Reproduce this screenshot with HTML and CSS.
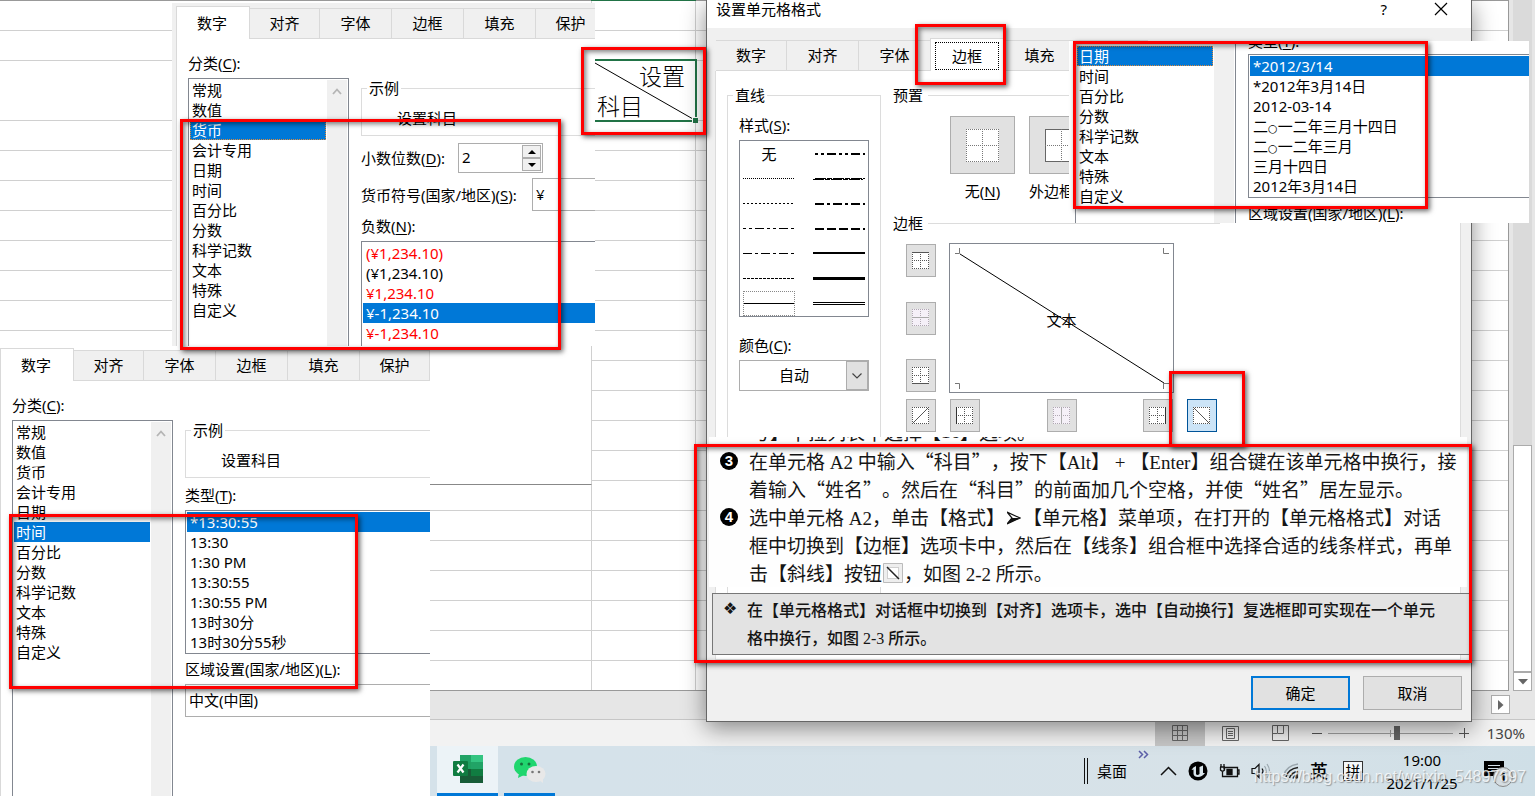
FILE: index.html
```html
<!DOCTYPE html>
<html lang="zh-CN">
<head>
<meta charset="utf-8">
<title>设置单元格格式</title>
<link rel="stylesheet" href="styles.css">
</head>
<body>
<svg class="defs" aria-hidden="true">
  <symbol id="cell" viewBox="0 0 17 17">
    <rect width="17" height="17" fill="#fff"/>
    <path d="M0 .5H17M0 16.5H17M.5 0V17M16.5 0V17M0 8.5H17M8.5 0V17" stroke="#555" stroke-dasharray="1 1"/>
  </symbol>
  <symbol id="cell-off" viewBox="0 0 17 17">
    <rect width="17" height="17" fill="#f5f0f8"/>
    <path d="M0 .5H17M0 16.5H17M.5 0V17M16.5 0V17M0 8.5H17M8.5 0V17" stroke="#b0a8b2" stroke-dasharray="1 1"/>
  </symbol>
  <symbol id="cell-open" viewBox="0 0 17 17">
    <rect width="17" height="17" fill="#fff"/>
    <path d="M0 .5H17M0 16.5H17M.5 0V17M16.5 0V17" stroke="#555" stroke-dasharray="1 1"/>
  </symbol>
  <symbol id="chev-up" viewBox="0 0 10 7"><path d="M1 6L5 1.5L9 6" fill="none" stroke="#b5b5b5" stroke-width="1.8"/></symbol>
</svg>

<div class="desktop">
  <main class="workbook">
    <div class="grid">
      <i></i><i></i><i class="tall"></i><i></i><i></i><i></i><i></i><i></i><i></i><i></i><i></i><i></i><i></i><i></i><i></i><i></i><i></i><i></i><i></i><i></i><i></i><i></i>
      <div class="object"></div>
      <div class="top-edge"></div>
    </div>
    <div class="vscroll">
      <div class="thumb"></div>
      <button class="arrow" aria-label="向下滚动"><svg width="10" height="6"><path d="M0 0H10L5 5.5Z" fill="#666"/></svg></button>
    </div>
  </main>
  <div class="hscroll"><button class="arrow" aria-label="向右滚动"><svg width="6" height="10"><path d="M0 0V10L5.5 5Z" fill="#666"/></svg></button></div>
  <div class="status">
    <button class="view on" aria-label="普通"><svg width="16" height="16" fill="none" stroke="#666"><path d="M.5 .5H15.5V15.5H.5ZM5.5 0V16M10.5 0V16M0 5.5H16M0 10.5H16"/></svg></button>
    <button class="view" aria-label="页面布局"><svg width="17" height="15" fill="none" stroke="#666"><path d="M.5 .5H16.5V14.5H.5ZM4.5 2.5H12.5V12.5H4.5ZM6 5.5H11M6 7.5H11M6 9.5H11"/></svg></button>
    <button class="view" aria-label="分页预览"><svg width="17" height="16" fill="none" stroke="#666"><path d="M.5 .5H16.5V15.5H.5ZM5.5 0V8.5H11.5V0M0 8.5H5"/></svg></button>
    <div class="zoom">
      <svg width="10" height="10"><path d="M0 5.5H10" stroke="#555"/></svg>
      <svg width="125" height="16"><path d="M0 8.5H125M62.5 5V12" stroke="#a0a0a0"/><rect x="66" y="1" width="6" height="14" fill="#666"/></svg>
      <svg width="10" height="10"><path d="M0 5.5H10M5.5 0V10" stroke="#555"/></svg>
    </div>
    <span class="percent">130%</span>
  </div>

  <footer class="taskbar">
    <div class="apps">
      <button class="app current" aria-label="Excel"><svg width="30" height="29" viewBox="0 0 30 29">
        <rect x="7" y="0" width="12" height="8" fill="#21a366"/><rect x="18" y="0" width="12" height="8" fill="#33c481"/>
        <rect x="7" y="7" width="12" height="7" fill="#1ea160"/><rect x="18" y="7" width="12" height="7" fill="#21a366"/>
        <rect x="7" y="14" width="12" height="7" fill="#185c37"/><rect x="18" y="14" width="12" height="7" fill="#107c41"/>
        <rect x="7" y="21" width="23" height="7" fill="#185c37"/><rect x="0" y="6" width="15" height="15" rx="1" fill="#107c41"/>
        <path d="M4.500 9.500L10.500 17.500M10.500 9.500L4.500 17.500" stroke="#fff" stroke-width="2.200"/></svg></button>
      <button class="app" aria-label="微信"><svg width="32" height="26" viewBox="0 0 32 26">
        <ellipse cx="11.500" cy="9.500" rx="11.500" ry="9.500" fill="#20d66e"/><path d="M5 16L4 21L10 18Z" fill="#20d66e"/>
        <circle cx="7.500" cy="7" r="1.500" fill="#14713b"/><circle cx="15" cy="7" r="1.500" fill="#14713b"/>
        <ellipse cx="22" cy="17" rx="9.500" ry="8" fill="#e8e8e8"/><path d="M25 23L29 26L29 21Z" fill="#e8e8e8"/>
        <circle cx="18.500" cy="15" r="1.300" fill="#777"/><circle cx="25" cy="15" r="1.300" fill="#777"/></svg></button>
    </div>
    <div class="tray">
      <svg width="4" height="26"><path d="M.5 0V26M3.500 0V26" stroke="#111"/></svg>
      <span>桌面</span>
      <svg class="more" width="11" height="9" fill="none" stroke="#5c5fa8" stroke-width="1.500"><path d="M1 1L4.500 4.500L1 8M6 1L9.500 4.500L6 8"/></svg>
      <svg width="17" height="10"><path d="M1 9L8.500 1.500L16 9" fill="none" stroke="#111" stroke-width="1.500"/></svg>
      <svg width="20" height="20"><circle cx="10" cy="10" r="9.500" fill="#000"/><path d="M3.500 9Q5 6 8 5V13Q9 15 11.500 13V6L15 4.500V12L17 12Q14 16 10 16Q6 16 5.500 13V8.500Z" fill="#d8e4ea"/></svg>
      <svg width="21" height="14" fill="none" stroke="#111" stroke-width="1.300"><path d="M5 5.500V3.500H18.500V12.500H6M18.500 6H20V10H18.500M1 3H6M1.500 3V6Q3.500 8.500 5.500 6V3M2 0V3M5 0V3M3.500 8V12.500H6"/><path d="M8 5.500H13V10.500H8Z" fill="#111"/></svg>
      <svg width="21" height="16" fill="none" stroke="#111" stroke-width="1.200"><path d="M1 5.500H4L8 1.500V14.500L4 10.500H1Z"/><path d="M11 5.500Q13 8 11 10.500"/><path d="M13.500 3Q17 8 13.500 13M16 1Q21 8 16 15" stroke="#9aa6ad"/></svg>
      <svg width="16" height="16" fill="none" stroke="#222" stroke-width="1.400"><path d="M1 12Q3 3 15 1" stroke="#9aa6ad"/><path d="M3 14Q5 6 15 4.500M6.500 15Q8 9.500 15 8.500M10 15.500Q11 12.500 15 12"/><circle cx="13.500" cy="14" r="1" fill="#222"/></svg>
      <span class="ime">英</span>
      <span class="pin">拼</span>
      <span class="clock"><time>19:00</time><time>2021/1/25</time></span>
      <button class="notice" aria-label="通知"><svg width="21" height="20"><path d="M0 0H20V15H16L12 19V15H0Z" fill="#000"/><path d="M4 4.500H16M4 7.500H16M4 10.500H12" stroke="#d4e1e9"/></svg><b>1</b></button>
    </div>
    <div class="watermark">https://blog.csdn.net/weixin_54897697</div>
  </footer>

  <div class="merged"><svg width="99" height="60"><path d="M0 2L98 58" stroke="#000"/></svg><span class="col">设置</span><span class="row">科目</span><b></b></div>

  <section class="dialog">
    <header><h1>设置单元格格式</h1>
      <div class="caption"><button aria-label="帮助">?</button><button aria-label="关闭"><svg width="14" height="14"><path d="M1 1L13 13M13 1L1 13" stroke="#000" stroke-width="1.200"/></svg></button></div>
    </header>
    <div class="tabs"><button class="tab">数字</button><button class="tab">对齐</button><button class="tab">字体</button><button class="tab on"><span>边框</span></button><button class="tab">填充</button><button class="tab">保护</button></div>
    <div class="page">
      <fieldset class="lines"><legend>直线</legend>
        <p id="style-l">样式(<u>S</u>):</p>
        <ul class="styles" aria-labelledby="style-l">
          <li>无</li>
          <li><svg><path class="w2" d="M2 13H52" stroke-dasharray="3 3 3 3 9 3"/></svg></li>
          <li><svg><path d="M0 12.500H52" stroke-dasharray="1 1"/></svg></li>
          <li><svg><path d="M0 13.500H50M2 12.500H52" stroke-dasharray="11 1 5 1"/></svg></li>
          <li><svg><path d="M0 12.500H52" stroke-dasharray="2 2"/></svg></li>
          <li><svg><path class="w2" d="M2 13H52" stroke-dasharray="9 3 3 3"/></svg></li>
          <li><svg><path d="M0 12.500H52" stroke-dasharray="3 3 3 3 9 3"/></svg></li>
          <li><svg><path class="w2" d="M2 13H52" stroke-dasharray="9 3"/></svg></li>
          <li><svg><path d="M0 12.500H52" stroke-dasharray="9 3 3 3"/></svg></li>
          <li><svg><path class="w2" d="M0 12H52"/></svg></li>
          <li><svg><path d="M0 12.500H52" stroke-dasharray="3 1"/></svg></li>
          <li><svg><path class="w3" d="M0 12.500H52"/></svg></li>
          <li class="sel"><svg><path d="M0 12.500H52"/></svg></li>
          <li><svg><path d="M0 11.500H52M0 13.500H52"/></svg></li>
        </ul>
        <label for="color">颜色(<u>C</u>):</label>
        <div class="combo"><select id="color"><option>自动</option></select><svg width="10" height="6"><path d="M.5 .5L5 5L9.500 .5" fill="none" stroke="#444" stroke-width="1.200"/></svg></div>
      </fieldset>
      <div class="borders">
        <h2>预置</h2>
        <div class="presets">
          <div><button class="preset" aria-labelledby="none-l"><svg width="33" height="33"><rect width="33" height="33" fill="#fff"/><path d="M0 .5H33M0 32.500H33M.5 0V33M32.500 0V33M0 16.500H33M16.500 0V33" stroke="#777" stroke-dasharray="1 1"/></svg></button><span id="none-l">无(<u>N</u>)</span></div>
          <div><button class="preset" aria-labelledby="out-l"><svg width="33" height="33"><rect x=".5" y=".5" width="32" height="32" fill="#fff" stroke="#666"/><path d="M0 16.500H33M16.500 0V33" stroke="#777" stroke-dasharray="1 1"/></svg></button><span id="out-l">外边框</span></div>
        </div>
        <h2 class="short">边框</h2>
        <div class="editor">
          <div class="side">
            <button class="edge" aria-label="上边框"><svg width="17" height="17"><use href="#cell"/><path d="M0 .5H17" stroke="#555"/></svg></button>
            <button class="edge" aria-label="内部横线" disabled><svg width="17" height="17"><use href="#cell-off"/><path d="M0 8.500H17" stroke="#aaa"/></svg></button>
            <button class="edge" aria-label="下边框"><svg width="17" height="17"><use href="#cell"/><path d="M0 16.500H17" stroke="#555"/></svg></button>
          </div>
          <div class="preview"><svg viewBox="0 0 223 148"><g fill="none" stroke="#777"><path d="M5 9.500H9.500V4M213.500 4V9.500H219M5 139.500H9.500V145M213.500 145V139.500H219"/></g><path d="M10 10L214 139" stroke="#000"/></svg><span>文本</span></div>
          <span></span>
          <button class="edge" aria-label="斜线"><svg width="17" height="17"><use href="#cell-open"/><path d="M1 16L16 1" stroke="#555"/></svg></button>
          <div class="under">
            <button class="edge" aria-label="左边框"><svg width="17" height="17"><use href="#cell"/><path d="M.5 0V17" stroke="#333"/></svg></button>
            <button class="edge" aria-label="内部竖线" disabled><svg width="17" height="17"><use href="#cell-off"/><path d="M8.500 0V17" stroke="#aaa"/></svg></button>
            <button class="edge" aria-label="右边框"><svg width="17" height="17"><use href="#cell"/><path d="M16.500 0V17" stroke="#333"/></svg></button>
          </div>
          <button class="edge on" aria-label="反斜线"><svg width="17" height="17"><use href="#cell-open"/><path d="M1 1L16 16" stroke="#555"/></svg></button>
        </div>
      </div>
    </div>
    <div class="actions"><button class="ok">确定</button><button>取消</button></div>
  </section>

  <article class="scan">
    <p class="cut">号】下拉列表中选择【<span>16</span>】选项。</p>
    <div class="step"><b>3</b><p>在单元格<span> A2 </span>中输入“科目”，按下【<span>Alt</span>】<span> + </span>【<span>Enter</span>】组合键在该单元格中换行，接<br>着输入“姓名”。然后在“科目”的前面加几个空格，并使“姓名”居左显示。</p></div>
    <div class="step"><b>4</b><p>选中单元格<span> A2</span>，单击【格式】<svg width="14" height="14"><path d="M0 1L13 7L0 13L5 7Z" fill="none" stroke="#111" stroke-width="1.200"/><path d="M0 13L5 7H13Z" fill="#111"/></svg>【单元格】菜单项，在打开的【单元格格式】对话<br>框中切换到【边框】选项卡中，然后在【线条】组合框中选择合适的线条样式，再单<br>击【斜线】按钮<svg class="pic" width="20" height="20"><path d="M.5 .5H19.500V19.500H.5Z" fill="#eee" stroke="#bbb"/><path d="M4.500 4.500H15.500V15.500H4.500Z" fill="#fff" stroke="#aaa" stroke-dasharray="1 1"/><path d="M4 4L16 16" stroke="#222" stroke-width="1.500"/></svg>，如图<span> 2-2 </span>所示。</p></div>
  </article>
  <article class="tip"><b>❖</b><p>在【单元格格式】对话框中切换到【对齐】选项卡，选中【自动换行】复选框即可实现在一个单元<br>格中换行，如图<span> 2-3 </span>所示。</p></article>

  <section class="panel currency">
    <div class="tabs"><button class="tab on">数字</button><button class="tab">对齐</button><button class="tab">字体</button><button class="tab">边框</button><button class="tab">填充</button><button class="tab">保护</button></div>
    <div class="body">
      <p id="cat1">分类(<u>C</u>):</p>
      <div class="cols">
        <div class="box cat"><ul aria-labelledby="cat1"><li>常规</li><li>数值</li><li class="sel focus">货币</li><li>会计专用</li><li>日期</li><li>时间</li><li>百分比</li><li>分数</li><li>科学记数</li><li>文本</li><li>特殊</li><li>自定义</li></ul><div class="bar"><svg width="10" height="7"><use href="#chev-up"/></svg></div></div>
        <div class="opts">
          <fieldset class="sample"><legend>示例</legend>设置科目</fieldset>
          <div class="field"><label class="w97" for="dec">小数位数(<u>D</u>):</label><div class="spin"><input id="dec" value="2"><button aria-label="增加"><svg width="8" height="4"><path d="M0 4L4 0L8 4Z"/></svg></button><button aria-label="减少"><svg width="8" height="4"><path d="M0 0L4 4L8 0Z"/></svg></button></div></div>
          <div class="field second"><label class="w171" for="sym">货币符号(国家/地区)(<u>S</u>):</label><select id="sym"><option>¥</option></select></div>
          <p class="neg" id="neg">负数(<u>N</u>):</p>
          <ul class="box open" aria-labelledby="neg"><li class="red">(¥1,234.10)</li><li>(¥1,234.10)</li><li class="red">¥1,234.10</li><li class="sel">¥-1,234.10</li><li class="red">¥-1,234.10</li></ul>
        </div>
      </div>
    </div>
  </section>

  <section class="panel times">
    <div class="tabs"><button class="tab on">数字</button><button class="tab">对齐</button><button class="tab">字体</button><button class="tab">边框</button><button class="tab">填充</button><button class="tab">保护</button></div>
    <div class="body">
      <p id="cat2">分类(<u>C</u>):</p>
      <div class="cols">
        <div class="box cat"><ul aria-labelledby="cat2"><li>常规</li><li>数值</li><li>货币</li><li>会计专用</li><li>日期</li><li class="sel">时间</li><li>百分比</li><li>分数</li><li>科学记数</li><li>文本</li><li>特殊</li><li>自定义</li></ul><div class="bar"><svg width="10" height="7"><use href="#chev-up"/></svg></div></div>
        <div class="opts">
          <fieldset class="sample"><legend>示例</legend>设置科目</fieldset>
          <p class="type" id="type2">类型(<u>T</u>):</p>
          <ul class="box closed" aria-labelledby="type2"><li class="sel">*13:30:55</li><li>13:30</li><li>1:30 PM</li><li>13:30:55</li><li>1:30:55 PM</li><li>13时30分</li><li>13时30分55秒</li></ul>
          <label class="region" for="loc">区域设置(国家/地区)(<u>L</u>):</label>
          <select id="loc"><option>中文(中国)</option></select>
        </div>
      </div>
    </div>
  </section>

  <section class="panel dates">
    <div class="box cat"><ul><li class="sel focus">日期</li><li>时间</li><li>百分比</li><li>分数</li><li>科学记数</li><li>文本</li><li>特殊</li><li>自定义</li></ul><div class="bar"></div></div>
    <div class="opts">
      <p id="type3">类型(<u>T</u>):</p>
      <ul class="box closed" aria-labelledby="type3"><li class="sel">*2012/3/14</li><li>*2012年3月14日</li><li>2012-03-14</li><li>二<span class="zero">○</span>一二年三月十四日</li><li>二<span class="zero">○</span>一二年三月</li><li>三月十四日</li><li>2012年3月14日</li></ul>
      <p class="region">区域设置(国家/地区)(<u>L</u>):</p>
    </div>
  </section>

  <div class="mark m1"></div><div class="mark m2"></div><div class="mark m3"></div><div class="mark m4"></div><div class="mark m5"></div><div class="mark m6"></div><div class="mark m7"></div>
</div>
</body>
</html>
```

FILE: styles.css
```css
* { box-sizing: border-box; }
body { margin: 0; font: 15px/20px "Noto Sans", "Noto Sans CJK SC", sans-serif; color: #000; }
p, h1, h2, ul, fieldset, legend { margin: 0; padding: 0; font-size: inherit; font-weight: inherit; }
ul { list-style: none; }
button, input, select { font: inherit; color: inherit; margin: 0; padding: 0; border: 0; border-radius: 0; background: none; appearance: none; }
svg { display: block; flex: none; }
u { text-underline-offset: 2px; }
.defs { display: none; }

.desktop { position: relative; display: flex; flex-direction: column; min-height: 100vh; overflow: hidden; background: #fff; }

/* worksheet */
.workbook { flex: 1; display: flex; min-height: 0; background: #e6e6e6; }
.grid { position: relative; flex: 1; display: flex; flex-direction: column; border: 1px solid #999; border-left: 0; background: linear-gradient(#d0d0d0, #d0d0d0) 591px 0 / 1px 100% no-repeat, linear-gradient(#d0d0d0, #d0d0d0) 695px 0 / 1px 100% no-repeat, #fff; }
.grid i { flex: none; height: 30px; border-bottom: 1px solid #d0d0d0; }
.grid i.tall { height: 60px; }
.grid i:nth-of-type(22) { border: 0; height: 29px; }
.object { position: absolute; left: 0; top: 346px; width: 592px; height: 138px; background: #fff; border-right: 1px solid #d0d0d0; border-bottom: 1px solid #888; }
.top-edge { position: absolute; left: 591px; top: -1px; width: 105px; height: 1px; background: #217346; }
.vscroll { width: 26px; padding: 0 3px 0 4px; display: flex; flex-direction: column; background: linear-gradient(#dadada, #dadada) 4px 0 / 19px 100% no-repeat; }
.vscroll .thumb { margin-top: 445px; flex: 1; background: #fff; border: 1px solid #ababab; }
.arrow { width: 19px; height: 19px; background: #fff; border: 1px solid #ababab; display: grid; place-items: center; }
.hscroll { height: 29px; padding: 4px 25px 0 0; display: flex; justify-content: flex-end; background: #e6e6e6; border-bottom: 1px solid #c6c6c6; }
.status { height: 26px; display: flex; justify-content: flex-end; align-items: center; background: #f2f2f2; color: #444; }
.view { width: 50px; height: 26px; display: grid; place-items: center; }
.view.on { background: #c6c6c6; }
.zoom { display: flex; align-items: center; gap: 6px; padding-left: 7px; }
.percent { width: 66px; padding: 0 10px 0 16px; text-align: right; }

/* taskbar */
.taskbar { position: relative; height: 50px; display: flex; justify-content: space-between; background: linear-gradient(90deg, #d5e2ea 40%, #d7e2e8 80%, #cfdfe7); }
.apps { display: flex; gap: 6px; padding-left: 437px; }
.app { width: 61px; border-bottom: 3px solid #0078d7; display: grid; place-items: center; }
.app + .app { width: 51px; }
.app.current { background: #ecf3f7; }
.tray { display: flex; align-items: center; gap: 11px; padding-right: 19px; }
.tray > svg:first-child { margin-right: -2px; }
.tray .more { align-self: flex-start; margin-top: 4px; }
.ime { font-size: 18px; font-weight: 500; }
.pin { width: 20px; height: 20px; margin-left: 4px; border: 1px solid #333; line-height: 18px; text-align: center; background: #f4f8fa; }
.clock { display: flex; flex-direction: column; gap: 3px; width: 92px; margin-left: 2px; text-align: center; }
.notice { position: relative; width: 32px; height: 24px; margin-left: 5px; }
.notice b { position: absolute; left: 9px; top: 8px; width: 20px; height: 20px; border: 1px solid #888; border-radius: 50%; background: #d5dde1; font-size: 13px; line-height: 18px; }
.watermark { position: absolute; right: 9px; bottom: 9px; font: 16px/20px "Liberation Sans", sans-serif; color: rgba(255,255,255,.75); text-shadow: 1px 1px 1px rgba(90,90,90,.5); }

/* selected cell */
.merged { position: absolute; left: 595px; top: 59px; width: 102px; height: 63px; border: 2px solid #217346; border-left: 0; background: #fff; font-size: 23px; font-weight: 300; line-height: 30px; display: flex; flex-direction: column; }
.merged svg { position: absolute; left: 0; top: 0; }
.merged .col { align-self: flex-end; padding-right: 10px; }
.merged .row { padding-left: 2px; }
.merged b { position: absolute; right: -3px; bottom: -3px; width: 6px; height: 6px; background: #217346; border: 1px solid #fff; border-width: 1px 0 0 1px; }

/* tabs */
.tabs { display: flex; align-items: flex-end; height: 33px; }
.tab { flex: none; width: 72px; height: 31px; padding-bottom: 1px; border: 1px solid #d9d9d9; border-left: 0; background: #f0f0f0; }
.tab.on { width: 74px; height: 33px; padding: 0 2px 1px 0; border-left: 1px solid #d9d9d9; border-bottom: 0; background: #fff; }

/* dialog */
.dialog { position: absolute; left: 706px; top: 0; width: 766px; display: flex; flex-direction: column; background: #f0f0f0; border: 1px solid #666; border-top: 0; box-shadow: 0 6px 22px rgba(0,0,0,.45); }
.dialog header { display: flex; justify-content: space-between; height: 28px; padding: 0 23px 0 9px; background: #fff; line-height: 18px; }
.caption { display: flex; align-items: center; gap: 47px; height: 18px; }
.dialog .tabs { margin: 10px 9px 0; }
.dialog .tab:first-child { width: 71px; }
.dialog .tab:nth-child(3) { width: 71px; border-right: 0; }
.dialog .tab.on { width: 74px; padding: 3px 4px 1px; }
.tab.on span { display: block; line-height: 26px; border: 1px dotted #000; }
.page { display: flex; gap: 12px; min-height: 589px; margin: 0 10px 0 8px; padding: 14px 0 10px 11px; background: #fff; border: 1px solid #dcdcdc; border-top: 0; }
.lines { flex: none; width: 154px; padding: 0 11px; border: 1px solid #dcdcdc; display: flex; flex-direction: column; align-items: stretch; }
.lines legend { margin-left: -6px; padding: 0 2px; }
.lines p { margin: 10px 0 5px; }
.lines label { margin: 18px 0 5px; }
.styles { width: 130px; border: 1px solid #828790; display: grid; grid-template-columns: 52px 52px; gap: 0 18px; padding: 0 3px; }
.styles li { height: 25px; display: grid; place-items: center; }
.styles svg { width: 52px; height: 25px; stroke: #000; }
.styles .w2 { stroke-width: 2; }
.styles .w3 { stroke-width: 3; }
.styles .sel { outline: 1px dotted #888; outline-offset: -1px; }
.combo { position: relative; width: 130px; height: 31px; border: 1px solid #adadad; }
.combo select { width: 100%; height: 100%; padding: 0 20px 2px 0; text-align: center; text-align-last: center; background: linear-gradient(#e1e1e1, #e1e1e1) right / 21px 100% no-repeat; }
.combo::after { content: ""; position: absolute; right: 0; top: 0; width: 22px; height: 29px; box-sizing: border-box; border: 1px solid #adadad; pointer-events: none; }
.combo svg { position: absolute; right: 6px; top: 12px; }
.borders { flex: 1; }
.borders h2 { display: flex; align-items: center; gap: 5px; }
.borders h2::after { content: ""; flex: 1; height: 1px; background: #dcdcdc; }
.borders h2.short { margin-right: 240px; }
.presets { display: flex; gap: 14px; padding: 11px 0 12px 57px; }
.presets div { width: 65px; display: flex; flex-direction: column; align-items: center; gap: 7px; white-space: nowrap; }
.presets div:last-child { align-items: flex-start; }
.preset { width: 65px; height: 58px; display: grid; place-items: center; background: #e1e1e1; border: 1px solid #adadad; }
.editor { display: grid; grid-template-columns: 30px 225px 30px; gap: 6px 13px; padding: 10px 0 0 13px; }
.side { display: flex; flex-direction: column; justify-content: space-between; padding: 1px 0; }
.edge { width: 30px; height: 33px; display: grid; place-items: center; padding: 0 1px 1px 0; background: #e1e1e1; border: 1px solid #adadad; }
.edge.on { background: #cce4f7; border-color: #005499; }
.preview { position: relative; height: 150px; border: 1px solid #828790; display: grid; place-items: center; }
.preview svg { position: absolute; left: 0; top: 0; width: 100%; height: 100%; }
.preview span { padding-top: 4px; }
.under { display: flex; justify-content: space-between; padding: 0 1px; }
.actions { display: flex; justify-content: flex-end; gap: 13px; padding: 16px 9px 11px; }
.actions button { width: 99px; height: 34px; background: #e1e1e1; border: 1px solid #adadad; }
.actions .ok { border: 2px solid #0078d7; }

/* book excerpt */
.scan, .tip { position: absolute; font: 19px/28px "Noto Sans CJK SC", sans-serif; text-spacing-trim: space-all; color: #151515; white-space: nowrap; overflow: hidden; }
.scan span, .tip span { font-family: "Liberation Serif", serif; line-height: 1; white-space: pre; }
.scan { left: 709px; top: 437px; width: 758px; height: 150px; background: #fefefe; padding: 0 0 0 11px; }
.cut { height: 10px; padding-left: 31px; overflow: hidden; display: flex; align-items: flex-end; line-height: 30px; }
.cut span { line-height: 30px; }
.step { display: flex; gap: 11px; }
.step b { width: 18px; height: 18px; margin-top: 5px; border-radius: 50%; background: #000; color: #fff; font: bold 15px/18px "Liberation Sans", sans-serif; text-align: center; }
.step svg { display: inline-block; margin: 0 2px; }
.step svg.pic { margin: 0 1px; vertical-align: -2px; }
.tip { left: 712px; top: 593px; width: 757px; height: 62px; padding: 1px 0 0 10px; display: flex; gap: 8px; background: #e3e3e3; border: 1px solid #777; border-right: 0; font-size: 16px; font-weight: 500; }
.tip b { width: 16px; font-family: "DejaVu Sans", sans-serif; }

/* pasted panels */
.panel { position: absolute; overflow: hidden; background: #fff; }
.currency { left: 172px; top: 3px; width: 423px; height: 343px; padding: 3px 0 0 4px; background: #f0f0f0; }
.times { left: 0; top: 346px; width: 430px; bottom: 0; padding-top: 2px; display: flex; flex-direction: column; }
.panel .tab:nth-child(2), .panel .tab:nth-child(6) { width: 70px; }
.panel .body { flex: 1; display: flex; flex-direction: column; padding: 14px 0 0 11px; background: #fff; border-left: 1px solid #d9d9d9; }
.currency .body { height: 320px; }
.cols { flex: 1; display: grid; grid-template-columns: 161px 1fr; gap: 12px; padding-top: 5px; }
.opts { display: flex; flex-direction: column; min-width: 0; }
.box { border: 1px solid #828790; padding: 1px; background: #fff; }
.box li { padding-left: 3px; }
.zero { font: 11px/1 "DejaVu Sans", sans-serif; }
.cat { display: flex; gap: 1px; border-bottom: 0; padding-bottom: 0; }
.cat ul { flex: 1; }
.cat li { padding-left: 2px; }
.cat .bar { width: 20px; background: #f0f0f0; padding: 8px 5px; }
.box .sel { background: #0078d7; color: #fff; }
.box .focus { outline: 1px dotted #e08a3c; outline-offset: -1px; }
.box .red { color: #f00; }
.open, .closed { border-right: 0; padding-right: 0; }
.open { flex: 1; border-bottom: 0; }
.sample { height: 58px; padding: 10px 0 0 35px; border: 1px solid #dcdcdc; border-right: 0; }
.sample legend { margin-left: -30px; padding: 0 2px; }
.field { display: flex; align-items: center; margin-top: 7px; }
.second { margin-top: 5px; }
.w97 { width: 97px; flex: none; }
.w171 { width: 171px; flex: none; white-space: nowrap; }
.opts select { flex: 0 0 33px; height: 33px; padding: 0 0 2px 3px; border: 1px solid #adadad; border-right: 0; }
.field select { flex-grow: 1; }
.spin { display: grid; grid-template: 1fr 1fr / 1fr 19px; width: 85px; height: 30px; padding: 1px; border: 1px solid #adadad; }
.spin input { grid-row: 1 / 3; min-width: 0; width: 60px; padding: 0 0 2px 2px; }
.spin button { background: #f0f0f0; border: 1px solid #adadad; display: grid; place-items: center; }
.neg { margin: 5px 0; }
.type { margin: 7px 0 5px; }
.region { margin: 5px 0; }
.dates { left: 1069px; top: 41px; width: 460px; height: 182px; padding-left: 6px; display: grid; grid-template-columns: 161px 1fr; gap: 12px; }
.dates .cat { border-top: 0; padding-top: 5px; }
.dates .opts p:first-child { margin: -10px 0 3px; }

/* highlight frames */
.mark { position: absolute; border: 3px solid #f00; box-shadow: 2px 2px 5px rgba(0,0,0,.6), inset 2px 2px 5px rgba(0,0,0,.5); pointer-events: none; }
.m1 { left: 180px; top: 119px; width: 381px; height: 231px; }
.m2 { left: 581px; top: 47px; width: 125px; height: 88px; }
.m3 { left: 9px; top: 514px; width: 349px; height: 175px; }
.m4 { left: 915px; top: 24px; width: 91px; height: 61px; }
.m5 { left: 1073px; top: 41px; width: 355px; height: 168px; }
.m6 { left: 1169px; top: 371px; width: 76px; height: 76px; }
.m7 { left: 694px; top: 444px; width: 778px; height: 219px; }
```
